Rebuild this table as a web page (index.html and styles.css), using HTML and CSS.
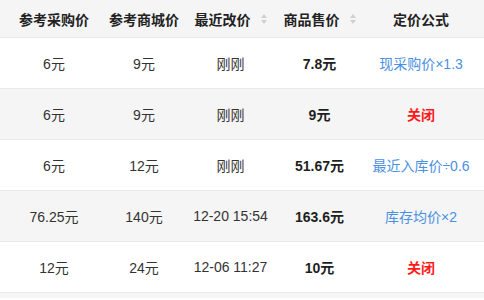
FILE: index.html
```html
<!DOCTYPE html>
<html lang="zh">
<head>
<meta charset="utf-8">
<title>定价</title>
<link rel="stylesheet" href="styles.css">
</head>
<body>
<table class="price-table">
  <colgroup>
    <col class="c1"><col class="c2"><col class="c3"><col class="c4"><col class="c5">
  </colgroup>
  <thead>
    <tr>
      <th>参考采购价</th>
      <th>参考商城价</th>
      <th><span class="th-sort">最近改价<span class="sort"><i class="up"></i><i class="down"></i></span></span></th>
      <th><span class="th-sort">商品售价<span class="sort"><i class="up"></i><i class="down"></i></span></span></th>
      <th>定价公式</th>
    </tr>
  </thead>
  <tbody>
    <tr>
      <td>6元</td><td>9元</td><td>刚刚</td><td class="price">7.8元</td><td class="formula">现采购价×1.3</td>
    </tr>
    <tr class="alt">
      <td>6元</td><td>9元</td><td>刚刚</td><td class="price">9元</td><td class="closed">关闭</td>
    </tr>
    <tr>
      <td>6元</td><td>12元</td><td>刚刚</td><td class="price">51.67元</td><td class="formula">最近入库价÷0.6</td>
    </tr>
    <tr class="alt">
      <td>76.25元</td><td>140元</td><td>12-20 15:54</td><td class="price">163.6元</td><td class="formula">库存均价×2</td>
    </tr>
    <tr>
      <td>12元</td><td>24元</td><td>12-06 11:27</td><td class="price">10元</td><td class="closed">关闭</td>
    </tr>
    <tr class="alt filler">
      <td></td><td></td><td></td><td></td><td></td>
    </tr>
  </tbody>
</table>
</body>
</html>
```
FILE: styles.css
```css
html, body {
  margin: 0;
  padding: 0;
  background: #ffffff;
}
body {
  font-family: "Liberation Sans", "Noto Sans CJK SC", sans-serif;
  font-size: 14px;
  color: #333333;
  width: 484px;
  height: 300px;
  overflow: hidden;
}
.price-table {
  width: 484px;
  border-collapse: collapse;
  table-layout: fixed;
}
.c1 { width: 108px; }
.c2 { width: 72px; }
.c3 { width: 101px; }
.c4 { width: 77px; }
.c5 { width: 126px; }
.price-table th,
.price-table td {
  padding: 0;
  text-align: center;
  white-space: nowrap;
  border-bottom: 1px solid #e9e9e9;
}
.price-table th {
  height: 37px;
  background: #f5f5f5;
  font-weight: bold;
  color: #222222;
}
.price-table td {
  height: 50px;
}
.price-table tr.filler td {
  height: 5px;
  border-bottom: 0;
}
.price-table tr.alt td {
  background: #f5f5f5;
}
.th-sort {
  display: inline-flex;
  align-items: center;
  gap: 10px;
}
.sort {
  display: inline-flex;
  flex-direction: column;
  gap: 2px;
}
.sort i {
  display: block;
  width: 0;
  height: 0;
  border-left: 3px solid transparent;
  border-right: 3px solid transparent;
}
.sort .up { border-bottom: 4px solid #cfcfcf; }
.sort .down { border-top: 4px solid #cfcfcf; }
.price {
  font-weight: bold;
  color: #1f1f1f;
}
.formula {
  color: #4a90e2;
}
.closed {
  color: #ff1a1a;
  font-weight: bold;
}
```
